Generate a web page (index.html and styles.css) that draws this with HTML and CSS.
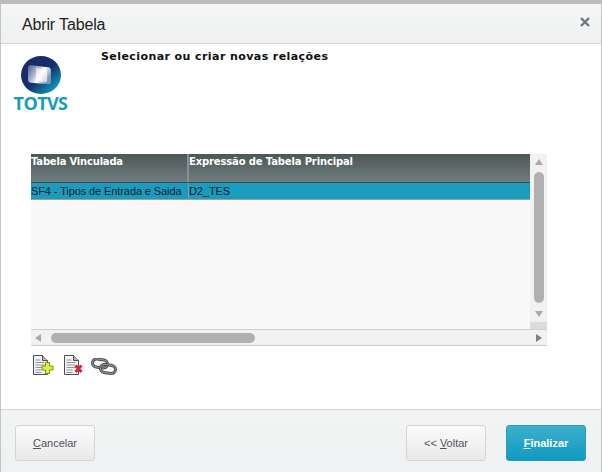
FILE: index.html
```html
<!DOCTYPE html>
<html lang="en">
<head>
  <meta charset="UTF-8" />
  <title>Abrir Tabela</title>
  <link rel="stylesheet" href="styles.css">
</head>
<body>

  <div class="dialog">
    <div class="dialog-header">
      <h1>Abrir Tabela</h1>
      <svg class="close" width="10" height="10" viewBox="0 0 10 10">
        <path d="M1 1l8 8M9 1l-8 8" stroke="#6d7484" stroke-width="2.400" fill="none"/>
      </svg>
    </div>

    <div class="dialog-body">
      <div class="top-row">
        <div class="logo">
          <svg width="40" height="38" viewBox="0 0 40 38">
            <defs>
              <linearGradient id="globe" x1="0.1" y1="0.1" x2="0.85" y2="0.9">
                <stop offset="0" stop-color="#1c2a66"/>
                <stop offset="0.55" stop-color="#14306f"/>
                <stop offset="1" stop-color="#0f9dbd"/>
              </linearGradient>
              <linearGradient id="pane" x1="0" y1="0" x2="1" y2="0.5">
                <stop offset="0" stop-color="#4d6090"/>
                <stop offset="0.4" stop-color="#aab4cc"/>
                <stop offset="0.65" stop-color="#ffffff"/>
                <stop offset="1" stop-color="#7f95b8"/>
              </linearGradient>
            </defs>
            <ellipse cx="20" cy="19" rx="20" ry="19" fill="url(#globe)"/>
            <path d="M7 12q0-3 3-2.700l17 2q3 .4 3 3.200v11q0 3-3 2.700l-17-1.500q-3-.3-3-3.200z" fill="url(#pane)"/>
            <path d="M15 12l11 2v12l-11-1z" fill="#fff" opacity="0.6"/>
          </svg>
          <span class="logo-name">TOTVS</span>
        </div>
        <h2>Selecionar ou criar novas relações</h2>
      </div>

      <div class="grid">
        <div class="grid-main">
          <div class="grid-table">
            <div class="grid-head">
              <div class="col-a">Tabela Vinculada</div>
              <div class="col-b">Expressão de Tabela Principal</div>
            </div>
            <div class="grid-row">
              <div class="col-a">SF4 - Tipos de Entrada e Saida</div>
              <div class="col-b">D2_TES</div>
            </div>
          </div>
          <div class="vscroll">
            <span class="arrow arrow-up"></span>
            <div class="vtrack"><div class="vthumb"></div></div>
            <span class="arrow arrow-down"></span>
            <div class="vend"></div>
          </div>
        </div>
        <div class="hscroll">
          <span class="arrow arrow-left"></span>
          <div class="htrack"><div class="hthumb"></div></div>
          <span class="arrow arrow-right"></span>
        </div>
      </div>

      <div class="tools">
        <svg width="22" height="20" viewBox="0 0 22 20">
          <path d="M1.500 .5h9l5 5v14h-14z" fill="#f4f4f4" stroke="#4c5056"/>
          <path d="M10.500 .5v5h5" fill="#bbb" stroke="#4c5056"/>
          <path d="M3.500 5h5M3.500 7.500h9M3.500 10h9M3.500 12.500h9M3.500 15h6M3.500 17.500h6" stroke="#8f949c"/>
          <path d="M13.500 7.500h4v3.500h3.500v4h-3.500v3.500h-4v-3.500h-3.500v-4h3.500z" fill="#e6ee3c" stroke="#7c8a2c"/>
        </svg>
        <svg width="22" height="20" viewBox="0 0 22 20">
          <path d="M1.500 .5h9l5 5v14h-14z" fill="#f4f4f4" stroke="#4c5056"/>
          <path d="M10.500 .5v5h5" fill="#bbb" stroke="#4c5056"/>
          <path d="M3.500 5h5M3.500 7.500h9M3.500 10h9M3.500 12.500h9M3.500 15h6M3.500 17.500h6" stroke="#8f949c"/>
          <path d="M12.500 10.500l6 6.500M18.500 10.500l-6 6.500" stroke="#d9263a" stroke-width="3"/>
        </svg>
        <svg class="link-icon" width="26" height="17" viewBox="0 0 26 17">
          <rect x="1.500" y="1.500" width="15" height="8" rx="4" fill="none" stroke="#4a4d50" stroke-width="3" transform="rotate(8 9 5.500)"/>
          <rect x="1.500" y="1.500" width="15" height="8" rx="4" fill="none" stroke="#9a9da0" stroke-width="1" transform="rotate(8 9 5.500)"/>
          <rect x="9.500" y="7" width="15" height="8" rx="4" fill="none" stroke="#4a4d50" stroke-width="3" transform="rotate(8 17 11)"/>
          <rect x="9.500" y="7" width="15" height="8" rx="4" fill="none" stroke="#9a9da0" stroke-width="1" transform="rotate(8 17 11)"/>
        </svg>
      </div>
    </div>

    <div class="dialog-footer">
      <button class="btn"><u>C</u>ancelar</button>
      <div class="footer-right">
        <button class="btn">&lt;&lt; <u>V</u>oltar</button>
        <button class="btn btn-primary"><u>F</u>inalizar</button>
      </div>
    </div>
  </div>

</body>
</html>
```

FILE: styles.css
```css
html, body {
  margin: 0;
  padding: 0;
  width: 602px;
  height: 472px;
  overflow: hidden;
  background: white;
}

.dialog {
  box-sizing: border-box;
  width: 602px;
  height: 472px;
  display: flex;
  flex-direction: column;
  border-top: 4px solid #bcbcbc;
  border-left: 1px solid #c4c4c4;
  border-right: 1px solid #c4c4c4;
  font-family: "Liberation Sans", Arial, sans-serif;
}

.dialog-header {
  height: 40px;
  box-sizing: border-box;
  flex: none;
  display: flex;
  align-items: center;
  justify-content: space-between;
  padding: 0 11px 0 21px;
  background: linear-gradient(#f5f6f6, #eff0f1);
  border-bottom: 1px solid #d6d6d6;
}

h1 {
  margin: 2px 0 0;
  font-size: 16px;
  font-weight: normal;
  letter-spacing: -0.15px;
  color: #222;
}

.close {
  margin-bottom: 4px;
}

.dialog-body {
  flex: 1;
  background: white;
  padding: 0 0 0 30px;
}

.top-row {
  display: flex;
  height: 110px;
}

.logo {
  width: 53px;
  margin-left: -17px;
  display: flex;
  flex-direction: column;
  align-items: center;
  padding-top: 12px;
  box-sizing: border-box;
}

.logo-name {
  font-family: "Open Sans", "Liberation Sans", sans-serif;
  font-weight: 700;
  font-size: 18px;
  letter-spacing: -0.6px;
  line-height: 15px;
  color: #1a9bbd;
  margin-top: 2px;
}

h2 {
  margin: 6px 0 0 34px;
  font-family: "DejaVu Sans", Verdana, sans-serif;
  font-size: 11px;
  font-weight: bold;
  letter-spacing: 0.42px;
  color: #111;
}

.grid {
  width: 516px;
}

.grid-main {
  display: flex;
  height: 175px;
}

.grid-table {
  flex: 1;
  background: #f9f9f9;
}

.grid-head {
  display: flex;
  height: 29px;
  box-sizing: border-box;
  background: linear-gradient(#4e5757, #6f7c7e);
  border-bottom: 1px solid #3f4749;
  color: white;
  font-family: "DejaVu Sans", Verdana, sans-serif;
  font-size: 10px;
  font-weight: bold;
  letter-spacing: -0.2px;
  line-height: 15px;
}

.grid-head .col-b {
  letter-spacing: -0.14px;
}

.grid-head .col-a {
  border-right: 2px solid #8a9092;
}

.grid-row {
  display: flex;
  height: 17px;
  background: #1b9bbd;
  border-bottom: 1px solid #9aa0a2;
  box-sizing: border-box;
  color: #12242b;
  font-size: 11px;
  letter-spacing: -0.1px;
  line-height: 16px;
}

.grid-row .col-a {
  border-right: 1px solid #8a9aa0;
}

.col-a {
  width: 158px;
  box-sizing: border-box;
  flex: none;
  white-space: nowrap;
}

.col-b {
  flex: 1;
  white-space: nowrap;
}

.vscroll {
  width: 17px;
  flex: none;
  display: flex;
  flex-direction: column;
  align-items: center;
  background: #f1f1f1;
}

.vtrack {
  flex: 1;
  width: 100%;
  display: flex;
  justify-content: center;
  padding-top: 7px;
}

.vthumb {
  width: 10px;
  height: 131px;
  background: #b0b0b0;
  border-radius: 5px;
}

.vend {
  width: 100%;
  height: 7px;
  background: #dcdcdc;
}

.arrow {
  flex: none;
  width: 0;
  height: 0;
  border-style: solid;
  border-color: transparent;
}

.arrow-up {
  margin: 5px 0 0;
  border-width: 0 4px 6px;
  border-bottom-color: #a8a8a8;
}

.arrow-down {
  margin: 0 0 5px;
  border-width: 6px 4px 0;
  border-top-color: #a8a8a8;
}

.arrow-left {
  margin: 0 5px 0 4px;
  border-width: 4px 6px 4px 0;
  border-right-color: #a8a8a8;
}

.arrow-right {
  margin: 0 5px 0 6px;
  border-width: 4px 0 4px 6px;
  border-left-color: #808080;
}

.hscroll {
  display: flex;
  align-items: center;
  height: 17px;
  box-sizing: border-box;
  background: #f1f1f1;
  border-top: 1px solid #cfcfcf;
  border-bottom: 1px solid #cfcfcf;
}

.htrack {
  flex: 1;
  padding-left: 5px;
}

.hthumb {
  width: 204px;
  height: 10px;
  background: #b0b0b0;
  border-radius: 5px;
}

.tools {
  display: flex;
  align-items: flex-start;
  gap: 9px;
  padding: 9px 0 0 1px;
}

.tools .link-icon {
  margin: 3px 0 0 -3px;
}

.dialog-footer {
  height: 63px;
  flex: none;
  box-sizing: border-box;
  display: flex;
  align-items: center;
  justify-content: space-between;
  padding: 3px 15px 0 14px;
  background: linear-gradient(#f2f3f3, #f0f1f2);
  border-top: 1px solid #d6d6d6;
}

.footer-right {
  display: flex;
  gap: 20px;
}

.btn {
  width: 80px;
  height: 36px;
  padding: 0;
  border: 1px solid #d4d4d4;
  border-radius: 3px;
  background: linear-gradient(#fbfbfb, #e9e9ea);
  font-family: "Liberation Sans", Arial, sans-serif;
  font-size: 11px;
  color: #50535e;
}

.btn-primary {
  border-color: #2a9dbd;
  background: linear-gradient(#3cafce, #109ac0);
  color: white;
  font-weight: bold;
}
```
